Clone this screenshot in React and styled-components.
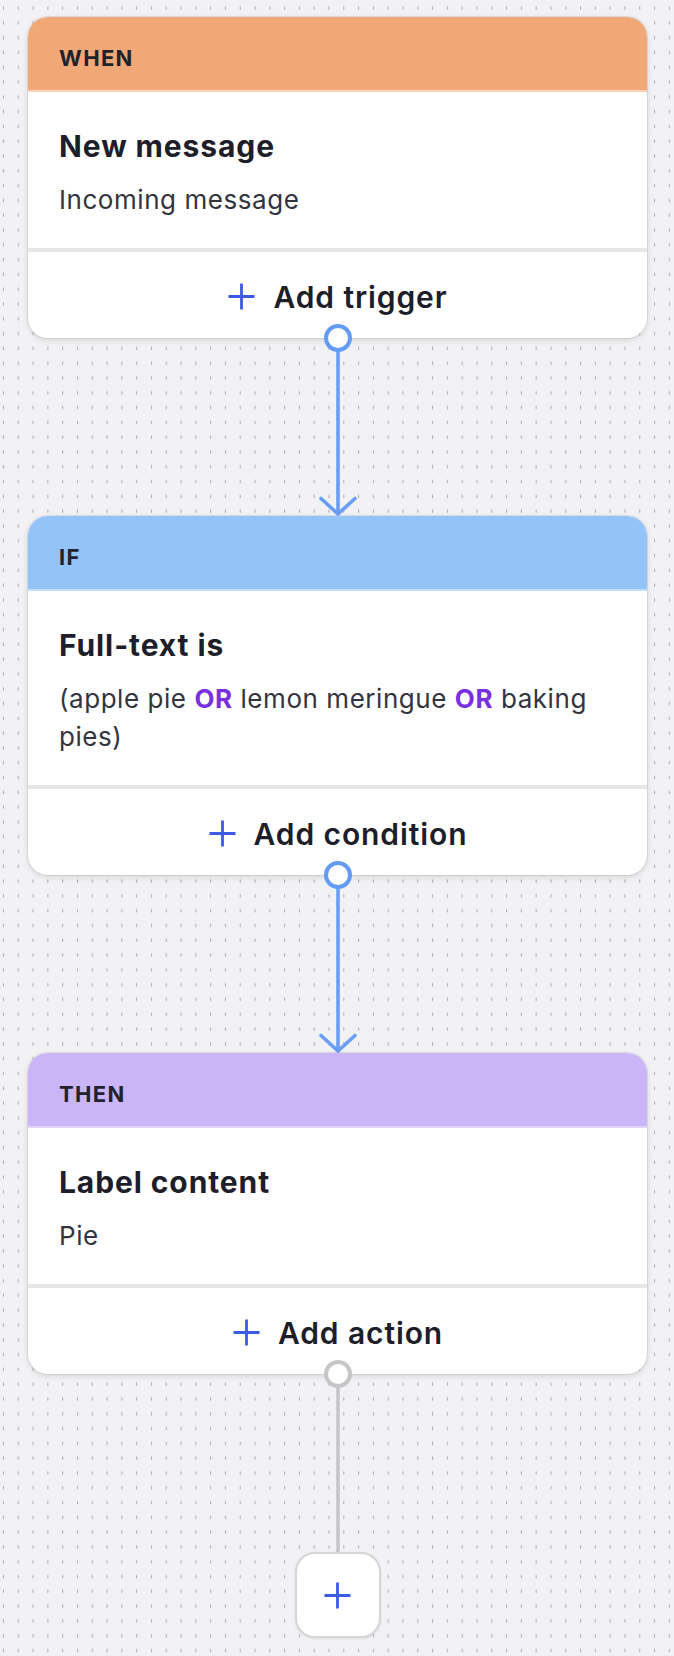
import React from "react";
import styled, { createGlobalStyle } from "styled-components";

const GlobalStyle = createGlobalStyle`
  html, body {
    margin: 0;
    padding: 0;
    background: #f2f2f4;
  }
  * { box-sizing: border-box; }
`;

const tones = {
  orange: { bg: "#f1a877", edge: "#fbd2b3" },
  blue: { bg: "#93c3f7", edge: "#c2ddfb" },
  purple: { bg: "#c9b5f7", edge: "#e0d4fb" },
};

const Canvas = styled.main`
  min-height: 1656px;
  padding: 17px 27px 16px 28px;
  display: flex;
  flex-direction: column;
  background-color: #f2f2f4;
  background-image: radial-gradient(
    ellipse 1px 1.9px at 3.5px 8px,
    #a9a9af 65%,
    rgba(169, 169, 175, 0) 100%
  );
  background-size: 14.8px 14.8px;
  font-family: Inter, "Noto Sans", sans-serif;
  color: #1e1e2a;
`;

const Card = styled.section`
  position: relative;
  background: #ffffff;
  border-radius: 20px;
  box-shadow: 0 0 0 1px rgba(0, 0, 0, 0.07), 0 2px 6px rgba(0, 0, 0, 0.12);
`;

const Header = styled.header`
  height: 75px;
  padding: 8px 31px 0;
  display: flex;
  align-items: center;
  background: ${(p) => tones[p.$tone].bg};
  border-bottom: 2px solid ${(p) => tones[p.$tone].edge};
  border-radius: 20px 20px 0 0;
  font-size: 22px;
  font-weight: 700;
  letter-spacing: 0.06em;
  color: #22222c;
`;

const Body = styled.div`
  padding: 36px 31px 29px;
`;

const Title = styled.h2`
  margin: 0 0 17px;
  font-size: 30px;
  line-height: 36px;
  font-weight: 700;
  letter-spacing: 0.03em;
  color: #1e1e2a;
`;

const Detail = styled.p`
  margin: 0;
  font-size: 26px;
  line-height: 38px;
  font-weight: 400;
  letter-spacing: 0.55px;
  color: #34343e;
`;

const Keyword = styled.strong`
  color: #7a2fe0;
  font-weight: 700;
`;

const Footer = styled.button`
  width: 100%;
  height: 90px;
  padding: 3px 0 0;
  display: flex;
  align-items: center;
  justify-content: center;
  gap: 17px;
  background: transparent;
  border: none;
  border-top: 4px solid #e6e6e8;
  border-radius: 0 0 20px 20px;
  font-family: inherit;
  font-size: 30px;
  font-weight: 600;
  letter-spacing: 0.03em;
  color: #1e1e2a;
  cursor: pointer;
`;

const Handle = styled.span`
  position: absolute;
  left: 50%;
  bottom: -14px;
  width: 28px;
  height: 28px;
  transform: translateX(-50%);
  border-radius: 50%;
  background: #ffffff;
  border: 4px solid ${(p) => (p.$muted ? "#c6c6c8" : "#649bf6")};
  z-index: 2;
`;

const Connector = styled.div`
  height: 178px;
  display: flex;
  justify-content: center;
`;

const EndStack = styled.div`
  display: flex;
  flex-direction: column;
  align-items: center;
`;

const AddBox = styled.button`
  width: 86px;
  height: 86px;
  display: flex;
  align-items: center;
  justify-content: center;
  background: #ffffff;
  border: 2px solid #d6d6d8;
  border-radius: 20px;
  box-shadow: 0 1px 3px rgba(0, 0, 0, 0.08);
  padding: 0;
  cursor: pointer;
`;

const PlusIcon = ({ size = 29 }) => (
  <svg width={size} height={size} viewBox="0 0 29 29" aria-hidden="true">
    <path
      d="M14.5 1.5v26M1.5 14.5h26"
      stroke="#3c5ae6"
      strokeWidth="2.8"
      fill="none"
    />
  </svg>
);

const ArrowLine = () => (
  <svg width="40" height="178" viewBox="0 0 40 178" aria-hidden="true">
    <path
      d="M20 13V176M3 160.5L20 176L37 160.5"
      stroke="#6a9ef6"
      strokeWidth="3.6"
      strokeLinecap="round"
      strokeLinejoin="round"
      fill="none"
    />
  </svg>
);

const PlainLine = () => (
  <svg width="40" height="178" viewBox="0 0 40 178" aria-hidden="true">
    <path d="M20 13V178" stroke="#c6c6c8" strokeWidth="3.6" fill="none" />
  </svg>
);

const FlowCard = ({ tone, label, title, children, addLabel, muted }) => (
  <Card>
    <Header $tone={tone}>{label}</Header>
    <Body>
      <Title>{title}</Title>
      <Detail>{children}</Detail>
    </Body>
    <Footer type="button">
      <PlusIcon />
      <span>{addLabel}</span>
    </Footer>
    <Handle $muted={muted} />
  </Card>
);

export default function App() {
  return (
    <>
      <GlobalStyle />
      <Canvas>
        <FlowCard tone="orange" label="WHEN" title="New message" addLabel="Add trigger">
          Incoming message
        </FlowCard>
        <Connector>
          <ArrowLine />
        </Connector>
        <FlowCard tone="blue" label="IF" title="Full-text is" addLabel="Add condition">
          (apple pie <Keyword>OR</Keyword> lemon meringue <Keyword>OR</Keyword> baking pies)
        </FlowCard>
        <Connector>
          <ArrowLine />
        </Connector>
        <FlowCard tone="purple" label="THEN" title="Label content" addLabel="Add action" muted>
          Pie
        </FlowCard>
        <EndStack>
          <Connector>
            <PlainLine />
          </Connector>
          <AddBox type="button" aria-label="Add step">
            <PlusIcon />
          </AddBox>
        </EndStack>
      </Canvas>
    </>
  );
}
